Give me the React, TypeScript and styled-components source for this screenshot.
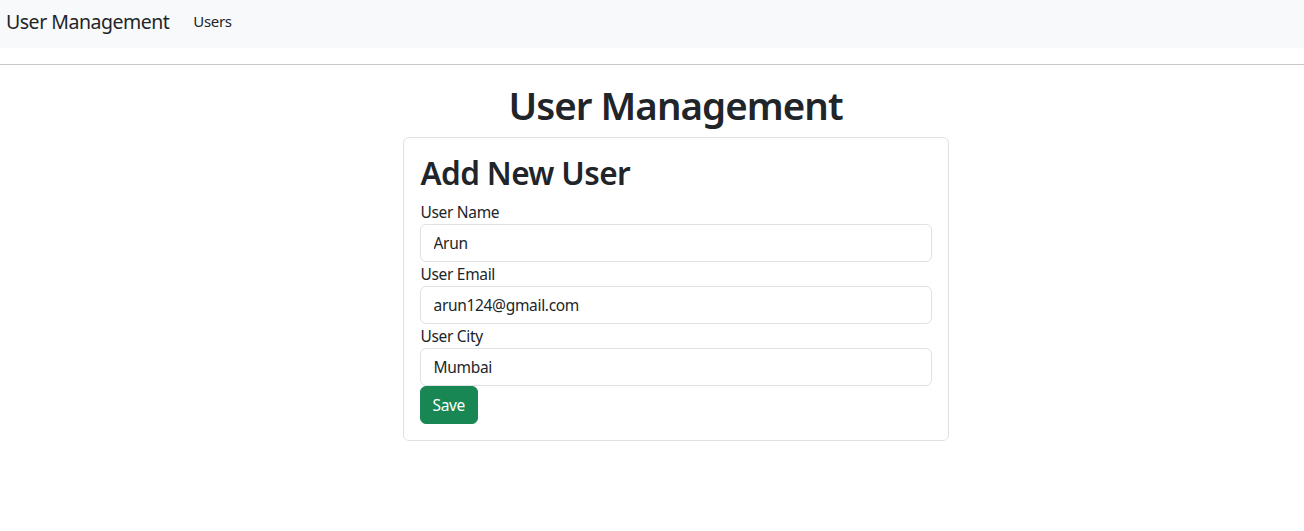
import React from 'react';
import styled, {createGlobalStyle} from "styled-components";

const GlobalStyle = createGlobalStyle`
  * {
    box-sizing: border-box;
  }
  body {
    margin: 0;
    font-family: "Segoe UI", "Noto Sans", "Open Sans", sans-serif;
    color: #212529;
    background: #fff;
    letter-spacing: -0.02em;
  }
`

const fields = [
  {label: 'User Name', value: 'Arun'},
  {label: 'User Email', value: 'arun124@gmail.com'},
  {label: 'User City', value: 'Mumbai'},
]

export default function App() {
  const fieldList = fields.map(field =>
    <Field key={field.label}>
      <Label>{field.label}</Label>
      <Input defaultValue={field.value}/>
    </Field>
  )

  return (
    <>
      <GlobalStyle/>
      <Navbar>
        <Brand>User Management</Brand>
        <NavLink>Users</NavLink>
      </Navbar>
      <Divider/>
      <Main>
        <Title>User Management</Title>
        <Card>
          <CardTitle>Add New User</CardTitle>
          {fieldList}
          <SaveButton>Save</SaveButton>
        </Card>
      </Main>
    </>
  );
}

const Navbar = styled.nav`
  height: 48px;
  background-color: #f8f9fa;
  display: flex;
  align-items: center;
  padding-left: 6px;
  padding-bottom: 4px;
  gap: 24px;
`
const Brand = styled.span`
  font-size: 19.5px;
  line-height: 30px;
  letter-spacing: -0.025em;
  color: #212529;
`
const NavLink = styled.span`
  font-size: 15px;
  line-height: 24px;
  color: #212529;
  padding-bottom: 2px;
`
const Divider = styled.hr`
  margin: 16px 0 0;
  border: none;
  border-top: 1px solid #c8c8c8;
`
const Main = styled.main`
  display: flex;
  flex-direction: column;
  align-items: center;
  padding-left: 47px;
  padding-top: 16px;
`
const Title = styled.h1`
  margin: 0 0 8px;
  font-size: 38.5px;
  line-height: 48px;
  font-weight: 600;
  letter-spacing: -0.025em;
`
const Card = styled.div`
  width: 546px;
  border: 1px solid #dee2e6;
  border-radius: 6px;
  padding: 16px;
  display: flex;
  flex-direction: column;
  align-items: flex-start;
`
const CardTitle = styled.h2`
  margin: 0 0 8px;
  padding-left: 1px;
  font-size: 31.5px;
  line-height: 38.4px;
  font-weight: 600;
  letter-spacing: -0.02em;
`
const Field = styled.div`
  width: 100%;
  display: flex;
  flex-direction: column;
`
const Label = styled.label`
  padding-left: 1px;
  font-size: 15.5px;
  line-height: 24px;
`
const Input = styled.input`
  width: 100%;
  height: 38px;
  padding: 6px 12px 6px 13px;
  font-family: inherit;
  font-size: 15.5px;
  letter-spacing: inherit;
  color: #212529;
  border: 1px solid #dee2e6;
  border-radius: 6px;
  outline: none;
`
const SaveButton = styled.button`
  height: 38px;
  padding: 6px 12px;
  font-family: inherit;
  font-size: 15.5px;
  letter-spacing: inherit;
  color: #fff;
  background-color: #198754;
  border: 1px solid #198754;
  border-radius: 6px;
  cursor: pointer;
`
